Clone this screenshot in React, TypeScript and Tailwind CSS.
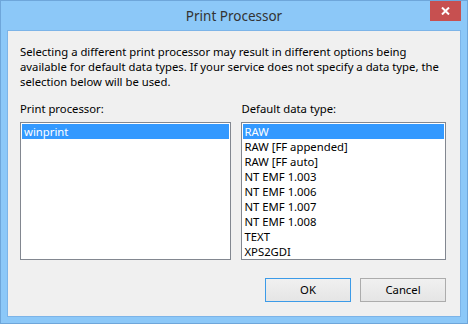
import React from "react";

const dataTypes = [
  "RAW",
  "RAW [FF appended]",
  "RAW [FF auto]",
  "NT EMF 1.003",
  "NT EMF 1.006",
  "NT EMF 1.007",
  "NT EMF 1.008",
  "TEXT",
  "XPS2GDI",
];

function ListBox({ items, selected }: { items: string[]; selected: number }) {
  return (
    <div className="h-[138px] border border-[#828790] bg-white p-px">
      {items.map((item, i) => (
        <div
          key={item}
          className={
            i === selected
              ? "h-[15px] pl-[2px] leading-[15px] bg-[#3399ff] text-white"
              : "h-[15px] pl-[2px] leading-[15px] text-black"
          }
        >
          {item}
        </div>
      ))}
    </div>
  );
}

export default function App() {
  return (
    <div
      className="w-[468px] h-[324px] bg-[#8cc8f8] border border-[#6ea6da] flex flex-col text-[11.3px] text-black"
      style={{ fontFamily: '"Noto Sans", "Open Sans", sans-serif' }}
    >
      {/* title bar */}
      <div className="relative h-[29px] flex items-center justify-center">
        <span className="text-[13.5px] text-[#333333] pt-px">Print Processor</span>
        <button className="absolute top-0 right-[6px] w-[31px] h-[20px] bg-[#c75050] flex items-center justify-center">
          <svg width="9" height="8" viewBox="0 0 9 8">
            <path d="M1 0.5 L8 7.5 M8 0.5 L1 7.5" stroke="white" strokeWidth="2" />
          </svg>
        </button>
      </div>

      {/* client area */}
      <div className="flex-1 mx-[6px] mb-[6px] border border-[#7cb4e8] bg-[#f0f0f0] pl-[12px] pr-[14px] pt-[13px] flex flex-col">
        <p className="leading-[15px] whitespace-nowrap">
          Selecting a different print processor may result in different options being
          <br />
          available for default data types. If your service does not specify a data type, the
          <br />
          selection below will be used.
        </p>

        <div className="mt-[12px] flex gap-[10px]">
          <div className="w-[211px] flex flex-col gap-[6px]">
            <div className="leading-[15px]">Print processor:</div>
            <ListBox items={["winprint"]} selected={0} />
          </div>
          <div className="w-[206px] flex flex-col gap-[6px]">
            <div className="leading-[15px] pl-px">Default data type:</div>
            <ListBox items={dataTypes} selected={0} />
          </div>
        </div>

        <div className="mt-[18px] flex justify-end gap-[9px]">
          <button className="w-[86px] h-[24px] border border-[#3c9be8] bg-gradient-to-b from-[#f0f0f0] to-[#e5e5e5]">
            OK
          </button>
          <button className="w-[86px] h-[24px] border border-[#acacac] bg-gradient-to-b from-[#f0f0f0] to-[#e5e5e5]">
            Cancel
          </button>
        </div>
      </div>
    </div>
  );
}
